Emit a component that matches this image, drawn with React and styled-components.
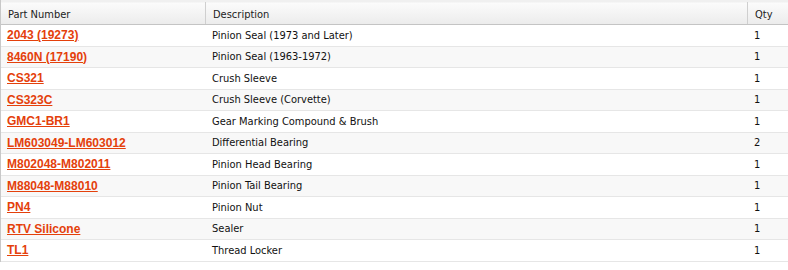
import styled, { createGlobalStyle } from "styled-components";

const GlobalStyle = createGlobalStyle`
    body {
        margin: 0;
        background: #ffffff;
        font-family: "DejaVu Sans Condensed", "Liberation Sans", sans-serif;
    }
`;

const parts = [
    { number: "2043 (19273)", description: "Pinion Seal (1973 and Later)", qty: 1 },
    { number: "8460N (17190)", description: "Pinion Seal (1963-1972)", qty: 1 },
    { number: "CS321", description: "Crush Sleeve", qty: 1 },
    { number: "CS323C", description: "Crush Sleeve (Corvette)", qty: 1 },
    { number: "GMC1-BR1", description: "Gear Marking Compound & Brush", qty: 1 },
    { number: "LM603049-LM603012", description: "Differential Bearing", qty: 2 },
    { number: "M802048-M802011", description: "Pinion Head Bearing", qty: 1 },
    { number: "M88048-M88010", description: "Pinion Tail Bearing", qty: 1 },
    { number: "PN4", description: "Pinion Nut", qty: 1 },
    { number: "RTV Silicone", description: "Sealer", qty: 1 },
    { number: "TL1", description: "Thread Locker", qty: 1 },
];

const Table = styled.div`
    width: 788px;
    border-left: 1px solid #c8c8c8;
    box-sizing: border-box;
`;

const Row = styled.div`
    display: grid;
    grid-template-columns: 204px 542px 1fr;
    height: ${(p) => (p.$header ? "25px" : "21.5px")};
    box-sizing: border-box;
    border-bottom: 1px solid ${(p) => (p.$header ? "#c4c4c4" : "#e6e6e6")};
    background: ${(p) =>
        p.$header
            ? "linear-gradient(#f0f0f0 0, #f0f0f0 2px, #fbfbfb 3px, #ececec 100%)"
            : p.$alt
            ? "#f8f8f8"
            : "#ffffff"};
`;

const HeadCell = styled.div`
    display: flex;
    align-items: center;
    padding: 2px 0 0 7px;
    font-size: 11px;
    color: #222;
    border-left: ${(p) => (p.$first ? "none" : "1px solid #cfcfcf")};
    margin-top: 2px;
`;

const Cell = styled.div`
    display: flex;
    align-items: center;
    padding-left: ${(p) => (p.$first ? "6px" : "7px")};
    font-size: 11px;
    color: #111;
`;

const PartLink = styled.a`
    color: #e4400b;
    font-family: "Liberation Sans", Arial, sans-serif;
    font-weight: bold;
    font-size: 12px;
    text-decoration: underline;
    cursor: pointer;
`;

const App = () => {
    return (
        <>
            <GlobalStyle />
            <Table>
                <Row $header>
                    <HeadCell $first>Part Number</HeadCell>
                    <HeadCell>Description</HeadCell>
                    <HeadCell>Qty</HeadCell>
                </Row>
                {parts.map((part, i) => (
                    <Row key={part.number} $alt={i % 2 === 1}>
                        <Cell $first>
                            <PartLink href="#">{part.number}</PartLink>
                        </Cell>
                        <Cell>{part.description}</Cell>
                        <Cell>{part.qty}</Cell>
                    </Row>
                ))}
            </Table>
        </>
    );
};

export default App;
